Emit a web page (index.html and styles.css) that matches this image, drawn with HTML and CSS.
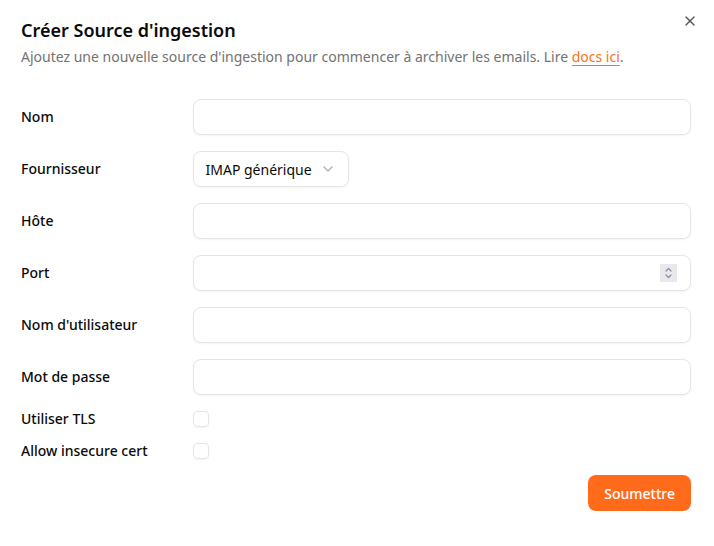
FILE: index.html
```html
<!DOCTYPE html>
<html lang="fr">
<head>
<meta charset="utf-8">
<link rel="stylesheet" href="styles.css">
</head>
<body>
<div class="dialog">
  <button class="close" aria-label="Close">
    <svg width="16" height="16" viewBox="0 0 24 24" fill="none" stroke="currentColor" stroke-width="2" stroke-linecap="round" stroke-linejoin="round"><path d="M18 6 6 18"/><path d="m6 6 12 12"/></svg>
  </button>
  <h2 class="title">Créer Source d'ingestion</h2>
  <p class="desc">Ajoutez une nouvelle source d'ingestion pour commencer à archiver les emails. Lire <a href="#" class="link">docs ici</a>.</p>
  <form class="form">
    <div class="row">
      <label class="label">Nom</label>
      <input class="input" type="text">
    </div>
    <div class="row">
      <label class="label">Fournisseur</label>
      <div class="field">
        <div class="select">
          <span>IMAP générique</span>
          <svg class="chev" width="16" height="16" viewBox="0 0 24 24" fill="none" stroke="currentColor" stroke-width="2" stroke-linecap="round" stroke-linejoin="round"><path d="m6 9 6 6 6-6"/></svg>
        </div>
      </div>
    </div>
    <div class="row">
      <label class="label">Hôte</label>
      <input class="input" type="text">
    </div>
    <div class="row">
      <label class="label">Port</label>
      <div class="field num-wrap">
        <input class="input" type="number">
        <svg class="spin" width="17" height="18" viewBox="0 0 17 18" fill="none" stroke="#8d8d9b" stroke-width="1.2" stroke-linecap="round" stroke-linejoin="round"><rect x="0" y="0" width="17" height="18" fill="#e9e9ed" stroke="none"/><path d="M6 7 8.5 4.5 11 7"/><path d="M6 11 8.5 13.5 11 11"/></svg>
      </div>
    </div>
    <div class="row">
      <label class="label">Nom d'utilisateur</label>
      <input class="input" type="text">
    </div>
    <div class="row">
      <label class="label">Mot de passe</label>
      <input class="input" type="password">
    </div>
    <div class="row row-check">
      <label class="label">Utiliser TLS</label>
      <div class="field"><span class="checkbox"></span></div>
    </div>
    <div class="row row-check">
      <label class="label">Allow insecure cert</label>
      <div class="field"><span class="checkbox"></span></div>
    </div>
    <div class="actions">
      <button type="button" class="btn">Soumettre</button>
    </div>
  </form>
</div>
</body>
</html>
```
FILE: styles.css
```css
* { box-sizing: border-box; }
html, body { margin: 0; background: #fff; }
body {
  font-family: "Noto Sans", "Liberation Sans", sans-serif;
  color: #0a0a0a;
}
.dialog {
  position: relative;
  padding: 16px 23px 24px 21px;
  width: 714px;
  min-height: 546px;
}
.close {
  position: absolute;
  top: 13px;
  right: 16px;
  border: 0;
  background: transparent;
  padding: 0;
  width: 16px;
  height: 16px;
  color: #27272a;
  opacity: 0.8;
  display: flex;
}
.title {
  margin: 0;
  font-size: 18px;
  line-height: 28px;
  font-weight: 600;
}
.desc {
  margin: 3px 0 0;
  font-size: 14px;
  line-height: 20px;
  color: #737373;
}
.link {
  color: #f97316;
  text-decoration: underline;
  text-underline-offset: 3px;
}
.form {
  margin-top: 32px;
  display: flex;
  flex-direction: column;
  gap: 16px;
}
.row {
  display: grid;
  grid-template-columns: repeat(4, 1fr);
  column-gap: 16px;
  align-items: center;
}
.row > .input, .row > .field { grid-column: span 3; }
.label {
  font-size: 14px;
  line-height: 20px;
  font-weight: 500;
}
.row-check { height: 16px; }
.row-check .label { line-height: 16px; }
.input {
  height: 36px;
  width: 100%;
  border: 1px solid #e5e5e5;
  border-radius: 8px;
  padding: 0 12px;
  font: inherit;
  font-size: 14px;
  background: #fff;
  box-shadow: 0 1px 2px rgba(0,0,0,0.05);
  outline: none;
  -moz-appearance: textfield;
}
.input::-webkit-outer-spin-button,
.input::-webkit-inner-spin-button { -webkit-appearance: none; margin: 0; }
.field { display: flex; }
.num-wrap { position: relative; }
.spin {
  position: absolute;
  right: 14px;
  top: 9px;
}
.select {
  height: 36px;
  display: inline-flex;
  align-items: center;
  gap: 8px;
  padding: 0 12px;
  border: 1px solid #e5e5e5;
  border-radius: 8px;
  font-size: 14px;
  box-shadow: 0 1px 2px rgba(0,0,0,0.05);
  white-space: nowrap;
}
.chev { color: #b0b0b0; }
.checkbox {
  width: 16px;
  height: 16px;
  border: 1px solid #e5e5e5;
  border-radius: 4px;
  box-shadow: 0 1px 2px rgba(0,0,0,0.05);
  display: block;
}
.actions {
  display: flex;
  justify-content: flex-end;
}
.btn {
  height: 36px;
  padding: 0 16px;
  border: 0;
  border-radius: 8px;
  background: #ff6b1a;
  color: #fff;
  font: inherit;
  font-size: 14px;
  font-weight: 500;
}
```
